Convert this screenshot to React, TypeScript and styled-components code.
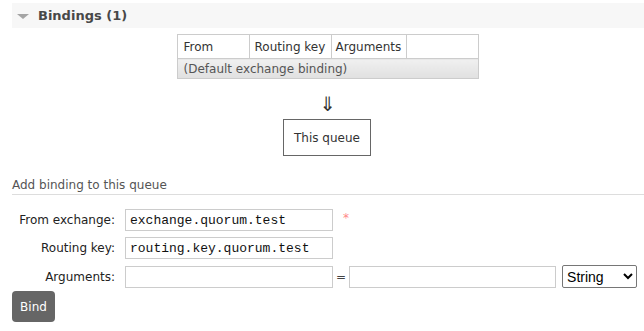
import styled, { createGlobalStyle } from "styled-components";

const Global = createGlobalStyle`
  body {
    margin: 0;
    background: #fff;
    font-family: "DejaVu Sans", Verdana, sans-serif;
    font-size: 12px;
    color: #484848;
  }
`;

const Page = styled.div`
  padding: 3px 0 0 12px;
`;

const SectionHeader = styled.div`
  display: flex;
  align-items: center;
  height: 25px;
  background: #f7f7f7;
  padding-left: 5px;
  gap: 9px;
`;

const Caret = styled.span`
  width: 0;
  height: 0;
  border-left: 6px solid transparent;
  border-right: 6px solid transparent;
  border-top: 5px solid #a5a5a5;
  margin-top: 1px;
`;

const Heading = styled.h2`
  margin: 0;
  font-size: 13px;
  font-weight: bold;
  color: #484848;
`;

const Center = styled.div`
  display: flex;
  flex-direction: column;
  align-items: center;
`;

const BindingTable = styled.table`
  margin: 6px 0 0 -1px;
  border-collapse: collapse;
  table-layout: fixed;
  width: 302px;
  font-size: 12px;

  th,
  td {
    border: 1px solid #ccc;
    text-align: left;
    font-weight: normal;
    white-space: nowrap;
    overflow: hidden;
    padding: 0 0 0 6px;
    height: 23px;
    color: #333;
  }

  th:nth-child(1) {
    width: 65px;
  }
  th:nth-child(2) {
    width: 76px;
    padding-left: 5px;
  }
  th:nth-child(3) {
    width: 70px;
    padding-left: 4px;
  }

  td {
    height: 19px;
    background: linear-gradient(#f0f0f0, #e0e0e0);
    color: #555;
  }
`;

const Arrow = styled.div`
  margin-top: 14px;
  font-size: 20px;
  line-height: 22px;
  color: #333;
`;

const QueueBox = styled.div`
  margin: 4px 0 0 -2px;
  width: 86px;
  height: 35px;
  border: 1px solid #666;
  display: flex;
  align-items: center;
  justify-content: center;
  color: #333;
`;

const SubHeading = styled.h3`
  margin: 22px 0 0;
  padding-bottom: 2px;
  font-size: 12px;
  font-weight: normal;
  color: #555;
  border-bottom: 1px solid #ddd;
`;

const Form = styled.div`
  display: grid;
  grid-template-columns: 103px auto;
  column-gap: 10px;
  row-gap: 6px;
  margin-top: 14px;
  align-items: center;
`;

const Label = styled.label`
  text-align: right;
  color: #222;
`;

const Row = styled.div`
  display: flex;
  align-items: center;
`;

const Input = styled.input<{ $w: number }>`
  box-sizing: border-box;
  width: ${(p) => p.$w}px;
  height: 22px;
  border: 1px solid #ccc;
  padding: 0 4px;
  font-family: "Liberation Mono", "Courier New", monospace;
  font-size: 13px;
  color: #111;
  outline: none;
`;

const Required = styled.span`
  color: #f88;
  margin-left: 10px;
  margin-top: -4px;
`;

const Equals = styled.span`
  margin: 0 3px;
  color: #444;
`;

const Select = styled.select`
  margin-left: 6px;
  width: 75px;
  height: 23px;
  border: 1px solid #767676;
  border-radius: 2px;
  background: #fff;
  font-family: "Liberation Sans", Arial, sans-serif;
  font-size: 14px;
  color: #000;
`;

const BindButton = styled.button`
  margin-top: 3px;
  width: 43px;
  height: 31px;
  border: none;
  border-radius: 4px;
  background: #666;
  color: #fff;
  font-family: "DejaVu Sans", Verdana, sans-serif;
  font-size: 12px;
  padding: 0;
`;

export default function App() {
  return (
    <Page>
      <Global />
      <SectionHeader>
        <Caret />
        <Heading>Bindings (1)</Heading>
      </SectionHeader>
      <Center>
        <BindingTable>
          <thead>
            <tr>
              <th>From</th>
              <th>Routing key</th>
              <th>Arguments</th>
              <th></th>
            </tr>
          </thead>
          <tbody>
            <tr>
              <td colSpan={4}>(Default exchange binding)</td>
            </tr>
          </tbody>
        </BindingTable>
        <Arrow>⇓</Arrow>
        <QueueBox>This queue</QueueBox>
      </Center>
      <SubHeading>Add binding to this queue</SubHeading>
      <Form>
        <Label>From exchange:</Label>
        <Row>
          <Input $w={208} defaultValue="exchange.quorum.test" />
          <Required>*</Required>
        </Row>
        <Label>Routing key:</Label>
        <Row>
          <Input $w={208} defaultValue="routing.key.quorum.test" />
        </Row>
        <Label>Arguments:</Label>
        <Row>
          <Input $w={208} />
          <Equals>=</Equals>
          <Input $w={207} />
          <Select defaultValue="string">
            <option value="string">String</option>
            <option value="number">Number</option>
            <option value="boolean">Boolean</option>
          </Select>
        </Row>
      </Form>
      <BindButton>Bind</BindButton>
    </Page>
  );
}
